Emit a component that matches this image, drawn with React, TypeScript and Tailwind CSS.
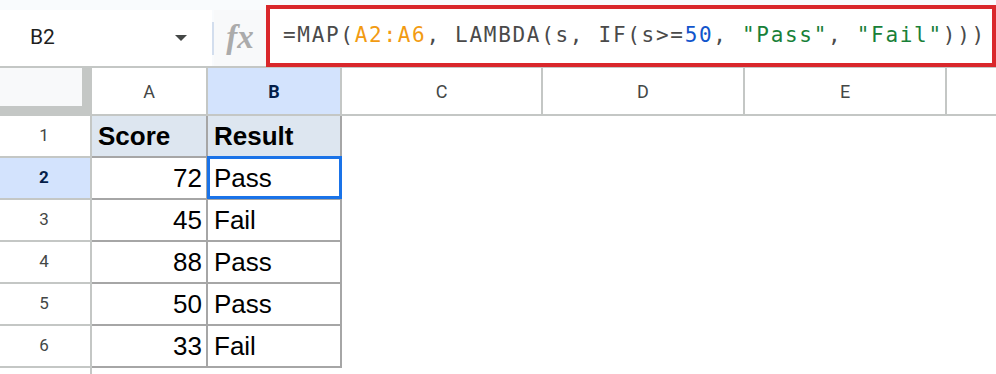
import React from "react";

type Row = { n: number; a: string; b: string; head?: boolean };

const rows: Row[] = [
  { n: 1, a: "Score", b: "Result", head: true },
  { n: 2, a: "72", b: "Pass" },
  { n: 3, a: "45", b: "Fail" },
  { n: 4, a: "88", b: "Pass" },
  { n: 5, a: "50", b: "Pass" },
  { n: 6, a: "33", b: "Fail" },
];

const ui = { fontFamily: "Roboto, 'Liberation Sans', sans-serif" };
const cellFont = { fontFamily: "'Liberation Sans', Arial, sans-serif" };
const mono = { fontFamily: "'DejaVu Sans Mono', 'Liberation Mono', monospace" };

function FormulaBar() {
  return (
    <div className="flex h-[66px] bg-[#f9fbfd]">
      <div className="mt-[10px] flex h-[56px] w-[212px] items-center justify-between bg-white pl-[30px] pr-[25px]" style={ui}>
        <span className="text-[21px] text-[#1f1f1f]">B2</span>
        <svg width="12" height="6" viewBox="0 0 12 6">
          <path d="M0 0h12L6 6z" fill="#444746" />
        </svg>
      </div>
      <div className="mt-[22px] h-[33px] w-[2px] bg-[#d3deee]" />
      <div className="mt-[10px] flex h-[56px] w-[52px] items-center justify-center bg-[#f8f9fa] pb-[2px]">
        <span className="text-[33px] leading-none font-bold italic text-[#ababab]" style={{ fontFamily: "'Liberation Serif', serif" }}>
          fx
        </span>
      </div>
      <div className="relative z-10 mt-[5px] flex h-[62px] flex-1 items-center border-4 border-[#d9272b] bg-white pl-[13px]">
        <span className="whitespace-pre text-[21px] tracking-[1.7px] text-[#4a4a4a]" style={mono}>
          =MAP(<span className="text-[#f29b12]">A2:A6</span>, LAMBDA(s, IF(s&gt;=<span className="text-[#1155cc]">50</span>,{" "}
          <span className="text-[#188038]">"Pass"</span>, <span className="text-[#188038]">"Fail"</span>)))
        </span>
      </div>
    </div>
  );
}

function ColumnHeaders() {
  const cols = [
    { l: "C", w: "w-[201px]" },
    { l: "D", w: "w-[202px]" },
    { l: "E", w: "w-[202px]" },
  ];
  return (
    <div className="flex h-[50px] border-y-2 border-[#c4c7c5] text-[18px] text-[#444746]" style={ui}>
      <div className="w-[92px] bg-[#c4c7c5]">
        <div className="h-[38px] w-[82px] bg-[#f8f9fa]" />
      </div>
      <div className="flex w-[116px] items-center justify-center border-r-2 border-[#c4c7c5]">A</div>
      <div className="flex w-[134px] items-center justify-center border-r-2 border-[#c4c7c5] bg-[#d3e3fd] font-bold text-[#041e49]">
        B
      </div>
      {cols.map((c) => (
        <div key={c.l} className={`flex ${c.w} items-center justify-center border-r-2 border-[#c4c7c5]`}>
          {c.l}
        </div>
      ))}
      <div className="flex-1" />
    </div>
  );
}

function DataRow({ row }: { row: Row }) {
  const selected = row.n === 2;
  return (
    <div className="flex h-[42px]">
      <div
        className={`flex w-[92px] items-center justify-center border-r-2 border-b-2 border-[#c4c7c5] pr-[2px] text-[17px] ${
          selected ? "bg-[#d3e3fd] font-bold text-[#041e49]" : "text-[#444746]"
        }`}
        style={ui}
      >
        {row.n}
      </div>
      <div
        className={`flex w-[116px] items-center border-r-2 border-b-2 border-[#a6a6a6] text-[26px] text-black ${
          row.head ? "bg-[#dde6f0] pl-[6px] font-bold" : "justify-end pr-[4px]"
        }`}
        style={cellFont}
      >
        {row.a}
      </div>
      <div
        className={`relative flex w-[134px] items-center border-r-2 border-b-2 border-[#a6a6a6] pl-[6px] text-[26px] text-black ${
          row.head ? "bg-[#dde6f0] font-bold" : ""
        }`}
        style={cellFont}
      >
        {row.b}
        {selected ? (
          <div className="absolute -top-[2px] -left-[1px] -right-[2px] -bottom-[1px] border-[3px] border-[#1a73e8]" />
        ) : null}
      </div>
    </div>
  );
}

export default function App() {
  return (
    <div className="h-[374px] w-[996px] overflow-hidden bg-white">
      <FormulaBar />
      <ColumnHeaders />
      {rows.map((r) => (
        <DataRow key={r.n} row={r} />
      ))}
      <div className="flex h-[20px]">
        <div className="w-[92px] border-r-2 border-[#c4c7c5]" />
      </div>
    </div>
  );
}
